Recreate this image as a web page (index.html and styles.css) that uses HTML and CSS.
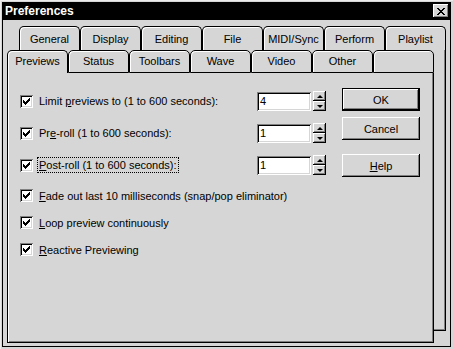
FILE: index.html
```html
<!DOCTYPE html>
<html lang="en">

<head>
  <meta charset="UTF-8" />
  <meta name="viewport" content="width=device-width, initial-scale=1.0" />
  <title>Preferences</title>
  <link rel="stylesheet" href="styles.css">
</head>

<body>
  <div class="window">
    <div class="frame">
      <div class="titlebar">
        <span class="title">Preferences</span>
        <button class="close-btn" title="Close">
          <svg width="8" height="7" viewBox="0 0 8 7" shape-rendering="crispEdges">
            <path fill="#000" d="M0 0h2v1h-2z M6 0h2v1h-2z M1 1h2v1h-2z M5 1h2v1h-2z M2 2h4v1h-4z M3 3h2v1h-2z M2 4h4v1h-4z M1 5h2v1h-2z M5 5h2v1h-2z M0 6h2v1h-2z M6 6h2v1h-2z" />
          </svg>
        </button>
      </div>

      <div class="client">
        <div class="tabstack">
          <!-- back row of tabs -->
          <div class="layer back">
            <div class="tabrow">
              <div class="tab">General</div>
              <div class="tab">Display</div>
              <div class="tab">Editing</div>
              <div class="tab">File</div>
              <div class="tab">MIDI/Sync</div>
              <div class="tab">Perform</div>
              <div class="tab">Playlist</div>
            </div>
            <div class="sheet"></div>
          </div>

          <!-- front row, holds the active page -->
          <div class="layer front">
            <div class="tabrow">
              <div class="tab selected">Previews</div>
              <div class="tab">Status</div>
              <div class="tab">Toolbars</div>
              <div class="tab">Wave</div>
              <div class="tab">Video</div>
              <div class="tab">Other</div>
              <div class="tab"></div>
            </div>
            <div class="sheet">
              <div class="options">
                <div class="row tall">
                  <label class="check"><span class="box"><svg width="7" height="7" viewBox="0 0 7 7" shape-rendering="crispEdges"><path fill="#000" d="M6 0h1v1h-1z M5 1h2v1h-2z M0 2h1v1h-1z M4 2h3v1h-3z M0 3h2v1h-2z M3 3h3v1h-3z M0 4h5v1h-5z M1 5h3v1h-3z M2 6h1v1h-1z" /></svg></span><span>Limit <u>p</u>reviews to (1 to 600 seconds):</span></label>
                  <div class="edit">4</div>
                  <div class="spin"><span class="up"></span><span class="down"></span></div>
                </div>
                <div class="row tall">
                  <label class="check"><span class="box"><svg width="7" height="7" viewBox="0 0 7 7" shape-rendering="crispEdges"><path fill="#000" d="M6 0h1v1h-1z M5 1h2v1h-2z M0 2h1v1h-1z M4 2h3v1h-3z M0 3h2v1h-2z M3 3h3v1h-3z M0 4h5v1h-5z M1 5h3v1h-3z M2 6h1v1h-1z" /></svg></span><span>Pr<u>e</u>-roll (1 to 600 seconds):</span></label>
                  <div class="edit">1</div>
                  <div class="spin"><span class="up"></span><span class="down"></span></div>
                </div>
                <div class="row tall">
                  <label class="check"><span class="box"><svg width="7" height="7" viewBox="0 0 7 7" shape-rendering="crispEdges"><path fill="#000" d="M6 0h1v1h-1z M5 1h2v1h-2z M0 2h1v1h-1z M4 2h3v1h-3z M0 3h2v1h-2z M3 3h3v1h-3z M0 4h5v1h-5z M1 5h3v1h-3z M2 6h1v1h-1z" /></svg></span><span class="focus"><u>P</u>ost-roll (1 to 600 seconds):</span></label>
                  <div class="edit">1</div>
                  <div class="spin"><span class="up"></span><span class="down"></span></div>
                </div>
                <div class="row short first">
                  <label class="check wide"><span class="box"><svg width="7" height="7" viewBox="0 0 7 7" shape-rendering="crispEdges"><path fill="#000" d="M6 0h1v1h-1z M5 1h2v1h-2z M0 2h1v1h-1z M4 2h3v1h-3z M0 3h2v1h-2z M3 3h3v1h-3z M0 4h5v1h-5z M1 5h3v1h-3z M2 6h1v1h-1z" /></svg></span><span><u>F</u>ade out last 10 milliseconds (snap/pop eliminator)</span></label>
                </div>
                <div class="row short">
                  <label class="check wide"><span class="box"><svg width="7" height="7" viewBox="0 0 7 7" shape-rendering="crispEdges"><path fill="#000" d="M6 0h1v1h-1z M5 1h2v1h-2z M0 2h1v1h-1z M4 2h3v1h-3z M0 3h2v1h-2z M3 3h3v1h-3z M0 4h5v1h-5z M1 5h3v1h-3z M2 6h1v1h-1z" /></svg></span><span><u>L</u>oop preview continuously</span></label>
                </div>
                <div class="row short">
                  <label class="check wide"><span class="box"><svg width="7" height="7" viewBox="0 0 7 7" shape-rendering="crispEdges"><path fill="#000" d="M6 0h1v1h-1z M5 1h2v1h-2z M0 2h1v1h-1z M4 2h3v1h-3z M0 3h2v1h-2z M3 3h3v1h-3z M0 4h5v1h-5z M1 5h3v1h-3z M2 6h1v1h-1z" /></svg></span><span><u>R</u>eactive Previewing</span></label>
                </div>
              </div>

              <div class="buttons">
                <button class="btn default">OK</button>
                <button class="btn cancel">Cancel</button>
                <button class="btn help"><u>H</u>elp</button>
              </div>
            </div>
          </div>
        </div>
      </div>
    </div>
  </div>
</body>

</html>
```

FILE: styles.css
```css
body {
  margin: 0;
  font-family: "Liberation Sans", Arial, sans-serif;
  font-size: 11px;
  color: #000;
  background: #d6d6d6;
}

.window {
  width: 453px;
  height: 349px;
  box-sizing: border-box;
  padding: 2px;
  background: #d6d6d6;
  box-shadow: inset 1px 1px 0 #ececec;
}

.frame {
  height: 100%;
  box-sizing: border-box;
  border: 1px solid #000;
  border-top: 0;
  display: flex;
  flex-direction: column;
}

.titlebar {
  height: 18px;
  margin: 0 -1px;
  padding: 0 2px 0 3px;
  background: #000;
  display: flex;
  align-items: center;
  justify-content: space-between;
}

.title {
  color: #fff;
  font-weight: bold;
  font-size: 12px;
}

.close-btn {
  width: 16px;
  height: 14px;
  padding: 0;
  border: 0;
  background: #d6d6d6;
  display: flex;
  align-items: center;
  justify-content: center;
  box-shadow: inset -1px -1px 0 #000, inset 1px 1px 0 #fff, inset -2px -2px 0 #808080;
}

.client {
  flex: 1;
}

/* both tab rows sit in the same grid cell */
.tabstack {
  display: grid;
}

.layer {
  grid-area: 1 / 1;
  width: 427px;
}

.back {
  margin: 6px 0 0 16px;
}

.front {
  margin: 30px 0 0 4px;
}

.tabrow {
  display: flex;
}

.tab {
  width: 61px;
  box-sizing: border-box;
  border: 1px solid #000;
  border-bottom: 0;
  border-radius: 5px 5px 0 0;
  background: #d6d6d6;
  text-align: center;
  line-height: 13px;
  box-shadow: inset 1px 1px 0 #fff;
}

.back .tab {
  height: 24px;
  padding-top: 6px;
}

.front .tab {
  height: 23px;
  padding-top: 4px;
  border-bottom: 1px solid #000;
}

.front .tab.selected {
  border-bottom: 0;
}

.back .sheet {
  height: 281px;
  box-sizing: border-box;
  border-right: 1px solid #000;
  border-bottom: 1px solid #000;
  box-shadow: inset -1px -1px 0 #808080;
}

.front .sheet {
  height: 270px;
  box-sizing: border-box;
  border: 1px solid #000;
  border-top: 0;
  background: #d6d6d6;
  box-shadow: inset 1px 0 0 #fff, inset -1px -1px 0 #808080;
  display: flex;
  padding: 12px 0 0 12px;
}

.options {
  width: 306px;
}

.row {
  display: flex;
  align-items: center;
}

.row.tall {
  height: 32px;
}

.row.short {
  height: 27px;
}

.row.first {
  margin-top: 1px;
}

.check {
  display: flex;
  align-items: center;
  gap: 6px;
  width: 237px;
  white-space: nowrap;
}

.check.wide {
  width: auto;
}

.box {
  width: 13px;
  height: 13px;
  box-sizing: border-box;
  background: #fff;
  display: flex;
  align-items: center;
  justify-content: center;
  box-shadow: inset 1px 1px 0 #808080, inset -1px -1px 0 #fff, inset 2px 2px 0 #000, inset -2px -2px 0 #d6d6d6;
}

.focus {
  border: 1px dotted #000;
  margin-left: -2px;
  padding: 0 1px;
  line-height: 14px;
}

.edit {
  width: 54px;
  height: 19px;
  box-sizing: border-box;
  background: #fff;
  padding: 3px 0 0 3px;
  line-height: 13px;
  box-shadow: inset 1px 1px 0 #808080, inset -1px -1px 0 #fff, inset 2px 2px 0 #000, inset -2px -2px 0 #d6d6d6;
}

.spin {
  width: 13px;
  height: 20px;
  margin-left: 2px;
  display: flex;
  flex-direction: column;
}

.spin span {
  flex: 1;
  background: #d6d6d6;
  display: flex;
  align-items: center;
  justify-content: center;
  box-shadow: inset -1px -1px 0 #000, inset 1px 1px 0 #fff, inset -2px -2px 0 #808080;
}

.spin span::before {
  content: "";
  width: 0;
  height: 0;
  border-left: 3px solid transparent;
  border-right: 3px solid transparent;
}

.spin .up::before {
  border-bottom: 3px solid #000;
}

.spin .down::before {
  border-top: 3px solid #000;
}

.buttons {
  margin-left: 16px;
  display: flex;
  flex-direction: column;
}

.btn {
  width: 78px;
  height: 23px;
  padding: 0;
  border: 0;
  background: #d6d6d6;
  font-family: "Liberation Sans", Arial, sans-serif;
  font-size: 11px;
  color: #000;
  box-shadow: inset -1px -1px 0 #000, inset 1px 1px 0 #fff, inset -2px -2px 0 #808080;
}

.btn.default {
  margin-top: 3px;
  border: 1px solid #000;
}

.btn.cancel {
  margin-top: 6px;
}

.btn.help {
  margin-top: 14px;
}
```
